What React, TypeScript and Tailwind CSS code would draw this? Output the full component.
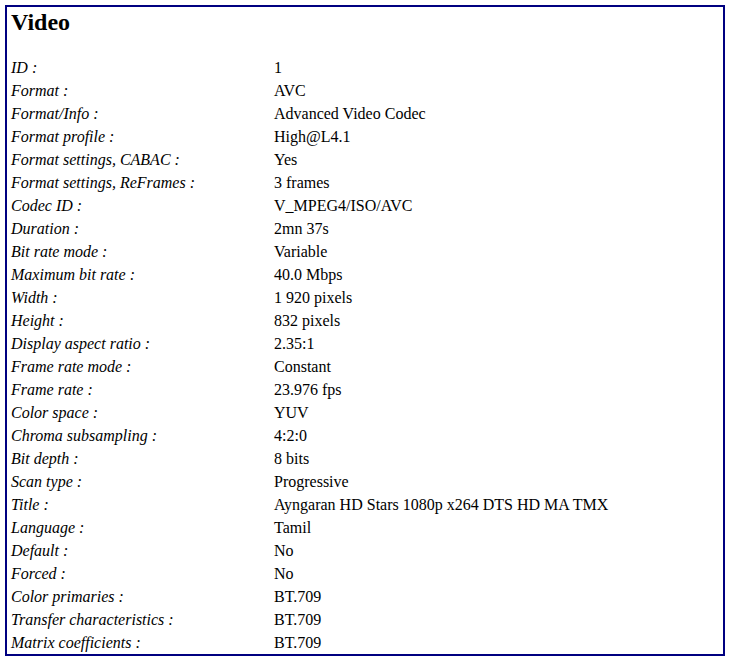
const rows: [string, string][] = [
  ["ID", "1"],
  ["Format", "AVC"],
  ["Format/Info", "Advanced Video Codec"],
  ["Format profile", "High@L4.1"],
  ["Format settings, CABAC", "Yes"],
  ["Format settings, ReFrames", "3 frames"],
  ["Codec ID", "V_MPEG4/ISO/AVC"],
  ["Duration", "2mn 37s"],
  ["Bit rate mode", "Variable"],
  ["Maximum bit rate", "40.0 Mbps"],
  ["Width", "1 920 pixels"],
  ["Height", "832 pixels"],
  ["Display aspect ratio", "2.35:1"],
  ["Frame rate mode", "Constant"],
  ["Frame rate", "23.976 fps"],
  ["Color space", "YUV"],
  ["Chroma subsampling", "4:2:0"],
  ["Bit depth", "8 bits"],
  ["Scan type", "Progressive"],
  ["Title", "Ayngaran HD Stars 1080p x264 DTS HD MA TMX"],
  ["Language", "Tamil"],
  ["Default", "No"],
  ["Forced", "No"],
  ["Color primaries", "BT.709"],
  ["Transfer characteristics", "BT.709"],
  ["Matrix coefficients", "BT.709"],
];

const App = () => {
  return (
    <div className="bg-white w-[730px] h-[658px] p-[5px] font-['Liberation_Serif',serif] text-black">
      <div className="border-2 border-[#000080] w-[720px] h-[651px] pl-[4px]">
        <h2 className="text-[24px] leading-[28px] font-bold mt-[1px] mb-[20px]">Video</h2>
        {rows.map(([label, value]) => (
          <div key={label} className="flex text-[16px] leading-[23px]">
            <span className="w-[263px] shrink-0 italic">{label} :</span>
            <span>{value}</span>
          </div>
        ))}
      </div>
    </div>
  );
};

export default App;
